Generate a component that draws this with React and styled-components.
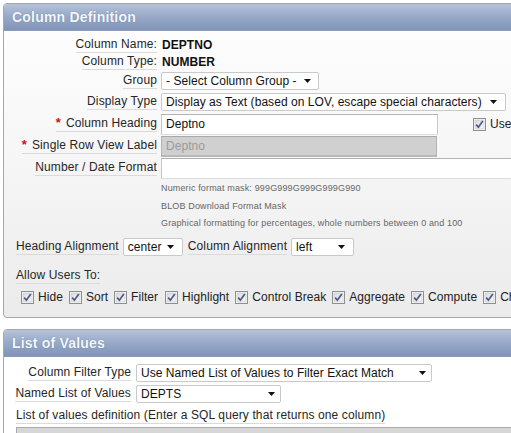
import React from "react";
import styled, { createGlobalStyle } from "styled-components";

const Global = createGlobalStyle`
  html, body { margin: 0; padding: 0; background: #ffffff; }
  body {
    font-family: "Liberation Sans", Arial, sans-serif;
    font-size: 12px;
    letter-spacing: 0.05px;
    color: #222;
    overflow: hidden;
  }
`;

const Page = styled.div`
  width: 511px;
  height: 433px;
  overflow: hidden;
  padding: 3px 0 0 3px;
  box-sizing: border-box;
`;

const Panel = styled.section`
  width: 640px;
  border: 1px solid #a7a7a7;
  border-radius: 4px;
  overflow: hidden;
  margin-top: ${(p) => p.$mt || 0}px;
  background: linear-gradient(to bottom, #ffffff 0%, #f6f6f6 50%, #ebebeb 100%);
`;

const PanelHeader = styled.h2`
  margin: 0;
  height: 26px;
  display: flex;
  align-items: center;
  padding-left: 8px;
  font-size: 14px;
  letter-spacing: 0.2px;
  font-weight: bold;
  color: #f4f7fb;
  text-shadow: 0 0 1px rgba(60, 80, 120, 0.6);
  background: linear-gradient(to bottom, #b5c2d9 0%, #9aabc9 45%, #8094b8 100%);
  border-bottom: 1px solid #8a9bbb;
`;

const Body = styled.div`
  padding: ${(p) => p.$pad};
  background: ${(p) => p.$bg || "transparent"};
`;

const Row = styled.div`
  display: flex;
  align-items: center;
  height: ${(p) => p.$h}px;
  margin-top: ${(p) => p.$mt || 0}px;
`;

const LabelCell = styled.div`
  width: ${(p) => p.$w}px;
  margin-right: ${(p) => p.$gap}px;
  display: flex;
  justify-content: flex-end;
  flex: none;
`;

const Label = styled.span`
  display: inline-block;
  line-height: 14px;
  padding-bottom: 1px;
  letter-spacing: 0.12px;
  border-bottom: 1px solid #dadada;
  color: #262626;
  white-space: nowrap;
`;

const Req = styled.span`
  color: #cc1111;
  font-weight: bold;
  font-size: 13px;
  margin-right: 5px;
`;

const Value = styled.span`
  font-weight: bold;
  color: #111;
  padding-left: 1px;
`;

const SelectBox = styled.div`
  width: ${(p) => p.$w}px;
  height: 18px;
  box-sizing: border-box;
  border: 1px solid #c9c9c9;
  border-radius: 2px;
  background: #fff;
  display: flex;
  align-items: center;
  justify-content: space-between;
  padding: 0 ${(p) => p.$pr || 7}px 0 4px;
  color: #111;
  white-space: nowrap;
  overflow: hidden;
  flex: none;
  margin-left: ${(p) => p.$ml || 0}px;
`;

const Input = styled.div`
  width: ${(p) => p.$w}px;
  height: 21px;
  box-sizing: border-box;
  border: 1px solid ${(p) => (p.$disabled ? "#b4b4b4" : "#c7c7c7")};
  border-top-color: ${(p) => (p.$disabled ? "#a9a9a9" : "#b3b3b3")};
  border-bottom: ${(p) => (p.$disabled ? "2px solid #b9b9b9" : "1px solid #dedede")};
  background: ${(p) => (p.$disabled ? "#d0d0d0" : "#fff")};
  color: ${(p) => (p.$disabled ? "#9a9a9a" : "#111")};
  display: flex;
  align-items: center;
  padding-left: 4px;
  flex: none;
`;

const Help = styled.div`
  margin-left: 145px;
  height: ${(p) => p.$h}px;
  display: flex;
  align-items: center;
  font-size: 9px;
  letter-spacing: 0.15px;
  color: #666;
`;

const Inline = styled.span`
  margin-left: ${(p) => p.$ml || 0}px;
  margin-right: ${(p) => p.$mr || 0}px;
  display: inline-flex;
  align-items: center;
  white-space: nowrap;
`;

const CheckRow = styled.div`
  display: flex;
  align-items: center;
  height: 18px;
  margin-top: 4px;
  padding-left: 5px;
  white-space: nowrap;
`;

const CheckItem = styled.label`
  display: inline-flex;
  align-items: center;
  gap: 4px;
  margin-right: ${(p) => p.$mr || 6}px;
  margin-left: ${(p) => p.$ml || 0}px;
  color: #222;
`;

const SectionText = styled.div`
  height: ${(p) => p.$h}px;
  margin-top: ${(p) => p.$mt || 0}px;
  display: flex;
  align-items: center;
`;

const TextArea = styled.div`
  margin-top: 2px;
  height: 40px;
  border: 1px solid #a9a9a9;
  background: #d6d6d6;
`;

const Arrow = () => (
  <svg width="7" height="4" viewBox="0 0 7 4" style={{ flex: "none" }}>
    <polygon points="0,0 7,0 3.5,4" fill="#111" />
  </svg>
);

const Check = () => (
  <svg width="13" height="13" viewBox="0 0 13 13" style={{ flex: "none" }}>
    <defs>
      <linearGradient id="cbg" x1="0" y1="0" x2="1" y2="1">
        <stop offset="0" stopColor="#dcdcdc" />
        <stop offset="1" stopColor="#f6f6f6" />
      </linearGradient>
    </defs>
    <rect x="0.5" y="0.5" width="12" height="12" fill="#fdfdfd" stroke="#8e8f8f" />
    <rect x="2" y="2" width="9" height="9" fill="url(#cbg)" stroke="#c4c4c4" strokeWidth="0.6" />
    <path d="M3.2 6.6 L5.4 9.2 L9.8 3" fill="none" stroke="#4b5a8c" strokeWidth="1.7" />
  </svg>
);

const Select = ({ w, children, pr, ml }) => (
  <SelectBox $w={w} $pr={pr} $ml={ml}>
    <span>{children}</span>
    <Arrow />
  </SelectBox>
);

const FormRow = ({ h, mt, label, req, lw, gap, children }) => (
  <Row $h={h} $mt={mt}>
    <LabelCell $w={lw} $gap={gap}>
      <Label>
        {req && <Req>*</Req>}
        {label}
      </Label>
    </LabelCell>
    {children}
  </Row>
);

const checks = [
  ["Hide", 6],
  ["Sort", 6],
  ["Filter", 7],
  ["Highlight", 6],
  ["Control Break", 6],
  ["Aggregate", 6],
  ["Compute", 6],
  ["Chart", 6],
];

export default function App() {
  const L1 = { lw: 141, gap: 4 };
  const L2 = { lw: 115, gap: 5 };
  return (
    <>
      <Global />
      <Page>
        <Panel>
          <PanelHeader>Column Definition</PanelHeader>
          <Body $pad="5px 0 11px 12px">
            <FormRow h={17} label="Column Name:" {...L1}>
              <Value>DEPTNO</Value>
            </FormRow>
            <FormRow h={17} label="Column Type:" {...L1}>
              <Value>NUMBER</Value>
            </FormRow>
            <FormRow h={21} label="Group" {...L1}>
              <Select w={158}>- Select Column Group -</Select>
            </FormRow>
            <FormRow h={22} label="Display Type" {...L1}>
              <Select w={345} pr={8}>
                Display as Text (based on LOV, escape special characters)
              </Select>
            </FormRow>
            <FormRow h={22} label="Column Heading" req {...L1}>
              <Input $w={277}>Deptno</Input>
              <Inline $ml={35}>
                <CheckItem>
                  <Check />
                  Use
                </CheckItem>
              </Inline>
            </FormRow>
            <FormRow h={22} label="Single Row View Label" req {...L1}>
              <Input $w={276} $disabled>
                Deptno
              </Input>
            </FormRow>
            <FormRow h={22} label="Number / Date Format" {...L1}>
              <Input $w={400} />
            </FormRow>
            <Help $h={18}>Numeric format mask: 999G999G999G999G990</Help>
            <Help $h={17}>BLOB Download Format Mask</Help>
            <Help $h={18}>
              Graphical formatting for percentages, whole numbers between 0 and 100
            </Help>
            <Row $h={19} $mt={5}>
              <Label>Heading Alignment</Label>
              <Select w={60} pr={8} ml={4}>
                center
              </Select>
              <Inline $ml={5}>
                <Label>Column Alignment</Label>
              </Inline>
              <Select w={63} pr={8} ml={4}>
                left
              </Select>
            </Row>
            <SectionText $h={16} $mt={12}>
              <Label>Allow Users To:</Label>
            </SectionText>
            <CheckRow>
              {checks.map(([t, mr]) => (
                <CheckItem key={t} $mr={mr}>
                  <Check />
                  {t}
                </CheckItem>
              ))}
            </CheckRow>
          </Body>
        </Panel>

        <Panel $mt={11}>
          <PanelHeader>List of Values</PanelHeader>
          <Body $pad="6px 0 0 12px" $bg="#fff">
            <FormRow h={19} label="Column Filter Type" {...L2}>
              <Select w={296} pr={5}>
                Use Named List of Values to Filter Exact Match
              </Select>
            </FormRow>
            <FormRow h={19} mt={2} label="Named List of Values" {...L2}>
              <Select w={145} pr={5}>
                DEPTS
              </Select>
            </FormRow>
            <SectionText $h={18} $mt={4}>
              <Label>List of values definition (Enter a SQL query that returns one column)</Label>
            </SectionText>
            <TextArea />
          </Body>
        </Panel>
      </Page>
    </>
  );
}
